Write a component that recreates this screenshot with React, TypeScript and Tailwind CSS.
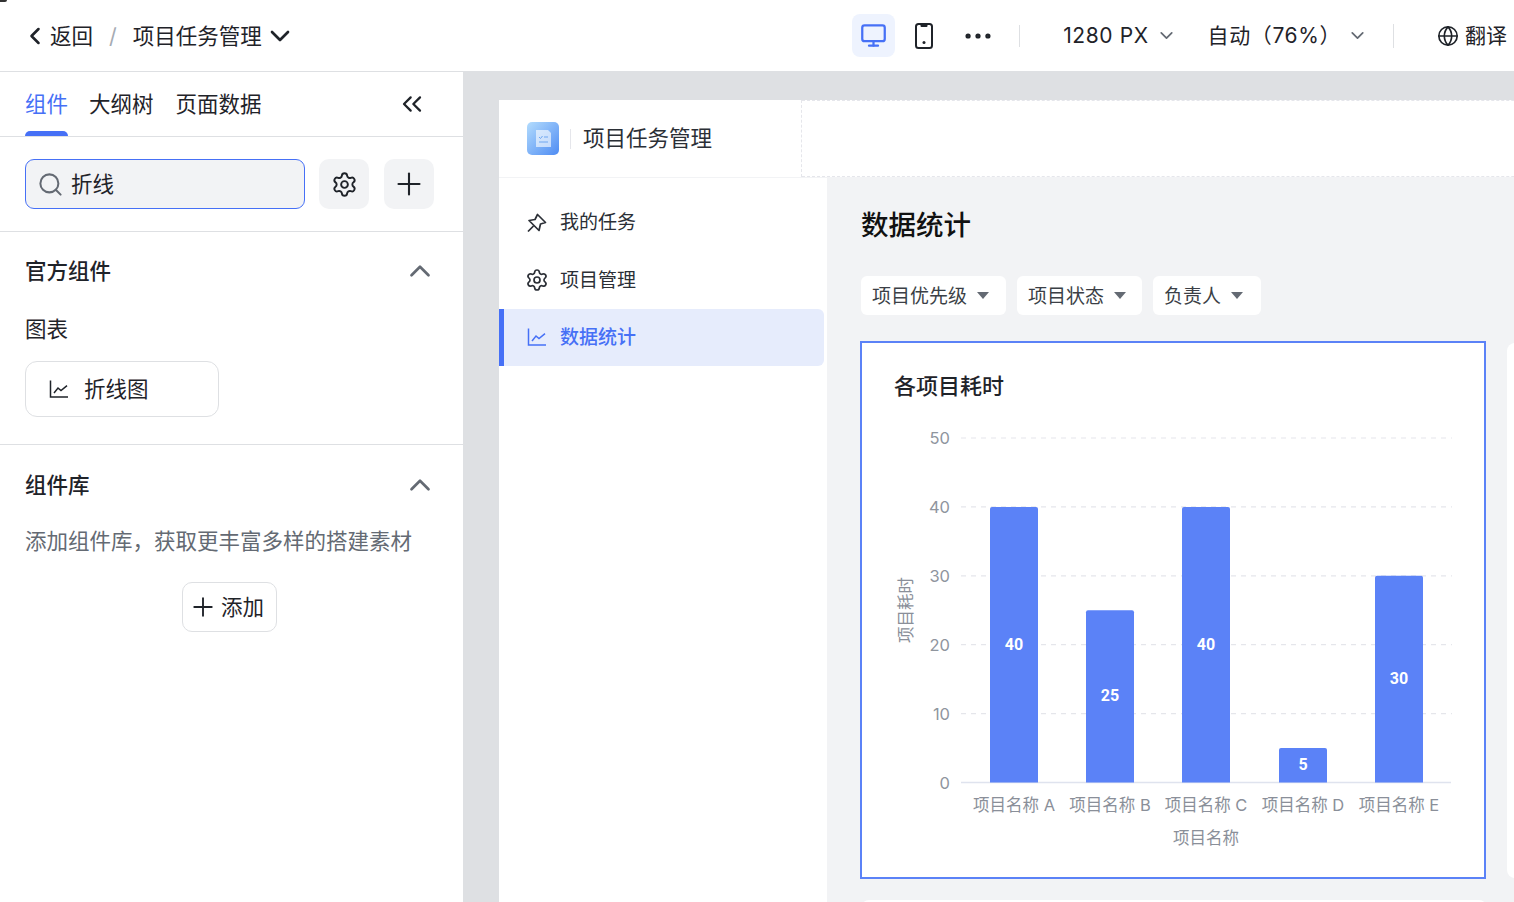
import { ChevronDown, ChevronLeft, ChevronUp, ChevronsLeft, Ellipsis, Globe, Monitor, Plus, Search, Settings } from 'lucide-react';

// Values and page-space positions of the bar chart.
const bars = [
  { name: '项目名称 A', value: 40, x: 990 },
  { name: '项目名称 B', value: 25, x: 1086 },
  { name: '项目名称 C', value: 40, x: 1182 },
  { name: '项目名称 D', value: 5, x: 1279 },
  { name: '项目名称 E', value: 30, x: 1375 },
];
const ticks = [50, 40, 30, 20, 10];
const zeroY = 782.5;
const unit = 6.89;

function LineChartIcon({ className }: { className?: string }) {
  return (
    <svg viewBox="0 0 20 20" fill="none" stroke="currentColor" strokeWidth="1.5" className={className}>
      <path d="M1.5 1.5V18H19" />
      <path d="M5 14l4-5 3 2.6 6-5" />
    </svg>
  );
}

function PinIcon({ className }: { className?: string }) {
  return (
    <svg viewBox="0 0 20 20" fill="none" stroke="currentColor" strokeWidth="1.7" strokeLinejoin="round" className={className}>
      <path d="M10.5 1.5l8 8-5 1.5-1.5 6.5L2 7.5l6-1z" />
      <path d="M6.5 13L1 18.5" />
    </svg>
  );
}

function PhoneIcon({ className }: { className?: string }) {
  return (
    <svg viewBox="0 0 18 26" fill="none" stroke="currentColor" strokeWidth="2" className={className}>
      <rect x="1" y="1" width="16" height="24" rx="2.5" />
      <path d="M5.5 1.5h7V3a1 1 0 0 1-1 1h-5a1 1 0 0 1-1-1z" fill="currentColor" stroke="none" />
      <circle cx="9" cy="19.5" r="1.5" fill="currentColor" stroke="none" />
    </svg>
  );
}

function Logo() {
  return (
    <svg viewBox="0 0 32 33" className="h-[33px] w-[32px] shrink-0">
      <defs>
        <linearGradient id="logo-bg" x1="0" y1="0" x2="1" y2="1">
          <stop offset="0" stopColor="#b3dcfd" />
          <stop offset="1" stopColor="#4f8cf3" />
        </linearGradient>
      </defs>
      <rect width="32" height="33" rx="5" fill="url(#logo-bg)" />
      <path d="M9 8h12l3 3v14H9z" fill="#fff" fillOpacity="0.62" />
      <path d="M12 15l1.5 1.5 2-2.5M17 15h4M12 20h9" stroke="#6fa6f0" strokeWidth="1" fill="none" />
    </svg>
  );
}

function Filter({ label, className }: { label: string; className: string }) {
  return (
    <div className={`flex h-[39px] items-center rounded-md bg-white pl-[11px] text-[19px] text-[#3b3f46] ${className}`}>
      <span className="pt-[3px]">{label}</span>
      <span className="ml-[10px] h-0 w-0 border-x-[6px] border-t-[7px] border-x-transparent border-t-[#646a73]" />
    </div>
  );
}

function BarChart() {
  return (
    <svg viewBox="862 415 622 460" className="mt-[14px] block h-[460px] w-[622px]" fontFamily="Inter, 'Noto Sans CJK SC', sans-serif">
      {ticks.map((t) => {
        const y = zeroY - t * unit;
        return (
          <g key={t}>
            <line x1="961" x2="1452" y1={y} y2={y} stroke="#e5e6eb" strokeWidth="1.2" strokeDasharray="5 5" />
            <text x="950" y={y + 6} textAnchor="end" fontSize="16.5" fill="#8f959e">{t}</text>
          </g>
        );
      })}
      <text x="950" y={zeroY + 6} textAnchor="end" fontSize="16.5" fill="#8f959e">0</text>
      <line x1="961" x2="1451" y1={zeroY} y2={zeroY} stroke="#dfe3ee" strokeWidth="1.6" />
      {bars.map((b) => {
        const h = b.value * unit;
        return (
          <g key={b.name}>
            <path d={`M${b.x} ${zeroY}V${zeroY - h + 2}q0-2 2-2h44q2 0 2 2V${zeroY}z`} fill="#5b82f7" />
            <text x={b.x + 24} y={zeroY - h / 2 + 5} textAnchor="middle" fontSize="16" fontWeight="700" fontFamily="Roboto, sans-serif" fill="#fff">{b.value}</text>
            <text x={b.x + 24} y="811" textAnchor="middle" fontSize="16.5" fill="#8a8f99">{b.name}</text>
          </g>
        );
      })}
      <text x="1206" y="844" textAnchor="middle" fontSize="16.5" fill="#8a8f99">项目名称</text>
      <text transform="translate(912 610) rotate(-90)" textAnchor="middle" fontSize="16.5" fill="#8a8f99">项目耗时</text>
    </svg>
  );
}

export default function App() {
  return (
    <div className="relative flex h-screen flex-col overflow-hidden bg-white font-['Inter','Noto_Sans_CJK_SC',sans-serif] text-[#1f2329]">
      <div className="absolute left-0 top-0 h-[2px] w-[7px] rounded-br-full bg-[#333]" />

      {/* top bar */}
      <header className="flex h-[72px] shrink-0 items-center justify-between border-b border-[#dee0e3] pl-[21px] pr-[7px]">
        <div className="flex items-center text-[21.5px]">
          <ChevronLeft className="h-[28px] w-[28px]" strokeWidth={2.2} />
          <span className="ml-[1px] pt-[1px]">返回</span>
          <span className="ml-[16px] pt-[1px] text-[#a6abb3]">/</span>
          <span className="ml-[16px] pt-[1px]">项目任务管理</span>
          <ChevronDown className="ml-[2px] h-[32px] w-[32px]" strokeWidth={2} />
        </div>
        <div className="flex items-center text-[21px]">
          <div className="flex h-[43px] w-[43px] items-center justify-center rounded-lg bg-[#eef3fe] text-[#4670f6]">
            <Monitor className="h-[27px] w-[27px]" strokeWidth={2} />
          </div>
          <PhoneIcon className="ml-[20px] h-[26px] w-[18px]" />
          <Ellipsis className="ml-[28px] h-[34px] w-[34px]" strokeWidth={1.7} />
          <span className="ml-[24px] h-[22px] w-px bg-[#dee0e3]" />
          <span className="ml-[43px] pt-[1px] tracking-[0.6px]">1280 PX</span>
          <ChevronDown className="ml-[7px] h-[21px] w-[21px] text-[#646a73]" strokeWidth={2} />
          <span className="ml-[31px] pt-[1px] tracking-[0.6px]">自动（76%）</span>
          <ChevronDown className="ml-[6px] h-[21px] w-[21px] text-[#646a73]" strokeWidth={2} />
          <span className="ml-[25px] h-[24px] w-px bg-[#dee0e3]" />
          <Globe className="ml-[43px] h-[22px] w-[22px]" strokeWidth={1.8} />
          <span className="ml-[6px] pt-[1px]">翻译</span>
        </div>
      </header>

      <div className="flex min-h-0 flex-1">
        {/* left panel */}
        <aside className="flex w-[464px] shrink-0 flex-col border-r border-[#dee0e3] bg-white">
          <div className="flex h-[65px] shrink-0 items-center border-b border-[#dee0e3] pl-[25px] pr-[35px] text-[21.5px]">
            <div className="relative flex h-full items-center text-[#4670f6]">
              组件
              <span className="absolute bottom-0 left-0 right-0 h-[5px] rounded-t-md bg-[#4670f6]" />
            </div>
            <span className="ml-[21px]">大纲树</span>
            <span className="ml-[22px]">页面数据</span>
            <ChevronsLeft className="ml-auto h-[32px] w-[32px]" strokeWidth={1.7} />
          </div>

          <div className="flex h-[95px] shrink-0 items-center border-b border-[#dee0e3] pl-[25px] text-[21.5px]">
            <div className="flex h-[50px] w-[280px] items-center rounded-[9px] border border-[#4670f6] bg-[#f2f3f5] pl-[11px]">
              <Search className="h-[27px] w-[27px] text-[#646a73]" strokeWidth={1.8} />
              <span className="ml-[7px]">折线</span>
            </div>
            <div className="ml-[14px] flex h-[50px] w-[50px] items-center justify-center rounded-[10px] bg-[#f2f3f5]">
              <Settings className="h-[27px] w-[27px]" strokeWidth={1.7} />
            </div>
            <div className="ml-[15px] flex h-[50px] w-[50px] items-center justify-center rounded-[10px] bg-[#f2f3f5]">
              <Plus className="h-[36px] w-[36px]" strokeWidth={1.4} />
            </div>
          </div>

          <section className="h-[213px] shrink-0 border-b border-[#dee0e3] px-[25px] pt-[23px] text-[21.5px]">
            <div className="flex h-[32px] items-center justify-between pr-[1px]">
              <span className="font-medium">官方组件</span>
              <ChevronUp className="h-[34px] w-[34px] text-[#646a73]" strokeWidth={1.9} />
            </div>
            <div className="mt-[26px] leading-[32px]">图表</div>
            <div className="mt-[16px] flex h-[56px] w-[194px] items-center rounded-xl border border-[#dee0e3] pl-[23px]">
              <LineChartIcon className="h-[20px] w-[20px]" />
              <span className="ml-[15px]">折线图</span>
            </div>
          </section>

          <section className="px-[25px] pt-[24px] text-[21.5px]">
            <div className="flex h-[32px] items-center justify-between pr-[1px]">
              <span className="font-medium">组件库</span>
              <ChevronUp className="h-[34px] w-[34px] text-[#646a73]" strokeWidth={1.9} />
            </div>
            <div className="mt-[24px] whitespace-nowrap leading-[32px] text-[#646a73]">添加组件库，获取更丰富多样的搭建素材</div>
            <div className="mt-[25px] ml-[157px] flex h-[50px] w-[95px] items-center rounded-[10px] border border-[#dee0e3] pl-[5px]">
              <Plus className="h-[30px] w-[30px]" strokeWidth={1.5} />
              <span className="ml-[3px]">添加</span>
            </div>
          </section>
        </aside>

        {/* canvas */}
        <main className="min-w-0 flex-1 overflow-hidden bg-[#dee0e3] pl-[35px] pt-[28px]">
          <div className="flex h-[830px] w-[1280px] flex-col bg-white">
            <div className="flex h-[78px] shrink-0 border-b border-[#f2f3f5]">
              <div className="flex w-[303px] items-center border-r border-dashed border-[#e5e6eb] pl-[28px]">
                <Logo />
                <span className="ml-[11px] h-[20px] w-px bg-[#e5e6eb]" />
                <span className="ml-[12px] text-[21.5px] text-[#2b2f36]">项目任务管理</span>
              </div>
              <div className="flex-1 border-y border-dashed border-[#e5e6eb]" />
            </div>

            <div className="flex min-h-0 flex-1">
              <nav className="w-[328px] shrink-0 pt-[17px] text-[19px] text-[#2b2f36]">
                <div className="flex h-[57px] items-center pl-[28px]">
                  <PinIcon className="mb-[2px] h-[20px] w-[20px]" />
                  <span className="ml-[13px]">我的任务</span>
                </div>
                <div className="flex h-[57px] items-center pl-[26px]">
                  <Settings className="mb-[2px] h-[24px] w-[24px]" strokeWidth={1.7} />
                  <span className="ml-[11px] pt-[2px]">项目管理</span>
                </div>
                <div className="flex h-[57px] w-[325px] items-center rounded-r-md border-l-[5px] border-[#4670f6] bg-[#e6ecfc] pl-[23px] font-medium text-[#4670f6]">
                  <LineChartIcon className="mb-[1px] h-[20px] w-[20px]" />
                  <span className="ml-[13px] pt-[2px]">数据统计</span>
                </div>
              </nav>

              <div className="min-w-0 flex-1 overflow-hidden bg-[#f2f3f5] pl-[34px] pt-[27px]">
                <h1 className="text-[27.5px] font-medium leading-[40px] text-[#111]">数据统计</h1>
                <div className="mt-[31px] flex gap-[11px]">
                  <Filter label="项目优先级" className="w-[145px]" />
                  <Filter label="项目状态" className="w-[125px]" />
                  <Filter label="负责人" className="w-[108px]" />
                </div>
                <div className="-ml-[1px] mt-[26px] flex gap-[21px]">
                  <div className="h-[538px] w-[626px] shrink-0 border-2 border-[#5b82f7] bg-white">
                    <div className="pl-[32px] pt-[28px] text-[22px] font-medium leading-[30px]">各项目耗时</div>
                    <BarChart />
                  </div>
                  <div className="mt-[2px] h-[535px] w-[300px] shrink-0 rounded-lg bg-white" />
                </div>
                <div className="mt-[21px] h-[100px] w-[626px] rounded-lg bg-white" />
              </div>
            </div>
          </div>
        </main>
      </div>
    </div>
  );
}
